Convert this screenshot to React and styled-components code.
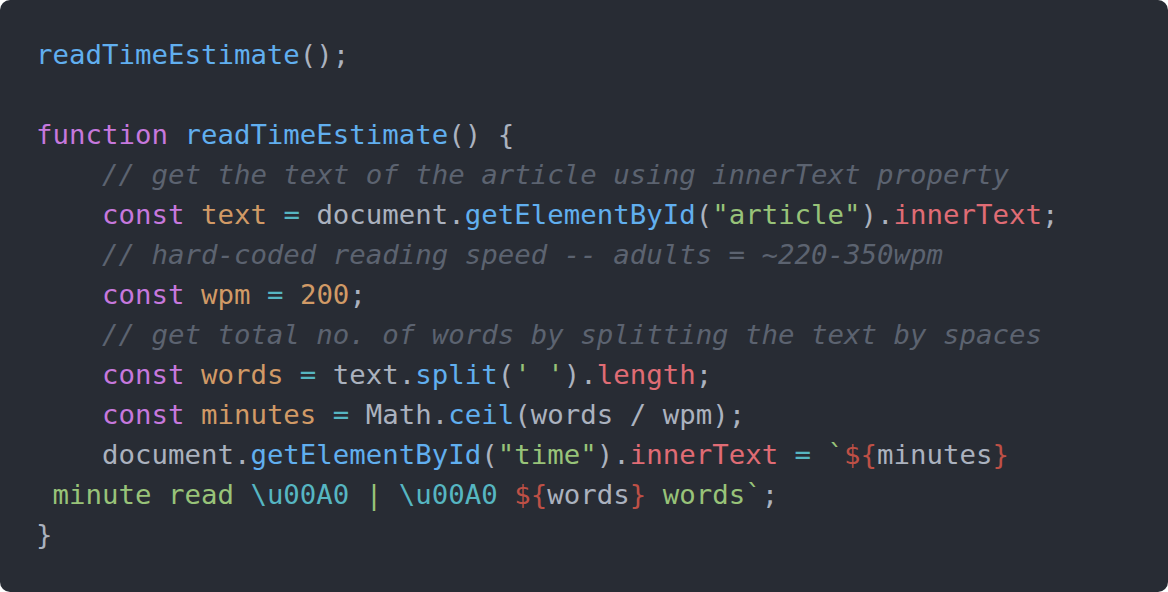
import styled, { createGlobalStyle } from "styled-components";

const GlobalStyle = createGlobalStyle`
  html, body {
    margin: 0;
    padding: 0;
    background: #ffffff;
  }
`;

const palette = {
  fn: "#61afef",
  kw: "#c678dd",
  var: "#d19a66",
  op: "#56b6c2",
  plain: "#abb2bf",
  str: "#98c379",
  prop: "#e06c75",
  sub: "#be5046",
  comment: "#5c6370",
};

// each line is a list of [kind, text] pairs
const lines = [
  [["fn", "readTimeEstimate"], ["plain", "();"]],
  [],
  [["kw", "function "], ["fn", "readTimeEstimate"], ["plain", "() {"]],
  [["plain", "    "], ["comment", "// get the text of the article using innerText property"]],
  [
    ["plain", "    "],
    ["kw", "const "],
    ["var", "text"],
    ["op", " = "],
    ["plain", "document."],
    ["fn", "getElementById"],
    ["plain", "("],
    ["str", "\"article\""],
    ["plain", ")."],
    ["prop", "innerText"],
    ["plain", ";"],
  ],
  [["plain", "    "], ["comment", "// hard-coded reading speed -- adults = ~220-350wpm"]],
  [["plain", "    "], ["kw", "const "], ["var", "wpm"], ["op", " = "], ["var", "200"], ["plain", ";"]],
  [["plain", "    "], ["comment", "// get total no. of words by splitting the text by spaces"]],
  [
    ["plain", "    "],
    ["kw", "const "],
    ["var", "words"],
    ["op", " = "],
    ["plain", "text."],
    ["fn", "split"],
    ["plain", "("],
    ["str", "' '"],
    ["plain", ")."],
    ["prop", "length"],
    ["plain", ";"],
  ],
  [
    ["plain", "    "],
    ["kw", "const "],
    ["var", "minutes"],
    ["op", " = "],
    ["plain", "Math."],
    ["fn", "ceil"],
    ["plain", "(words / wpm);"],
  ],
  [
    ["plain", "    document."],
    ["fn", "getElementById"],
    ["plain", "("],
    ["str", "\"time\""],
    ["plain", ")."],
    ["prop", "innerText"],
    ["op", " = "],
    ["str", "`"],
    ["sub", "${"],
    ["plain", "minutes"],
    ["sub", "}"],
  ],
  [
    ["str", " minute read "],
    ["op", "\\u00A0"],
    ["str", " | "],
    ["op", "\\u00A0"],
    ["str", " "],
    ["sub", "${"],
    ["plain", "words"],
    ["sub", "}"],
    ["str", " words`"],
    ["plain", ";"],
  ],
  [["plain", "}"]],
];

export default function App() {
  return (
    <>
      <GlobalStyle />
      <CodeCard>
        <Code>
          {lines.map((line, i) => (
            <Line key={i}>
              {line.length === 0
                ? " "
                : line.map(([kind, text], j) => (
                    <Token key={j} $kind={kind}>
                      {text}
                    </Token>
                  ))}
            </Line>
          ))}
        </Code>
      </CodeCard>
    </>
  );
}

const CodeCard = styled.div`
  box-sizing: border-box;
  width: 1168px;
  height: 592px;
  background: #282c34;
  border-radius: 10px;
  padding: 35px 36px;
  overflow: hidden;
`;

const Code = styled.pre`
  margin: 0;
  font-family: "DejaVu Sans Mono", "Liberation Mono", monospace;
  font-size: 27.4px;
  line-height: 40px;
  color: ${palette.plain};
  white-space: pre;
`;

const Line = styled.div`
  height: 40px;
`;

const Token = styled.span`
  color: ${({ $kind }) => palette[$kind]};
  font-style: ${({ $kind }) => ($kind === "comment" ? "italic" : "normal")};
`;
